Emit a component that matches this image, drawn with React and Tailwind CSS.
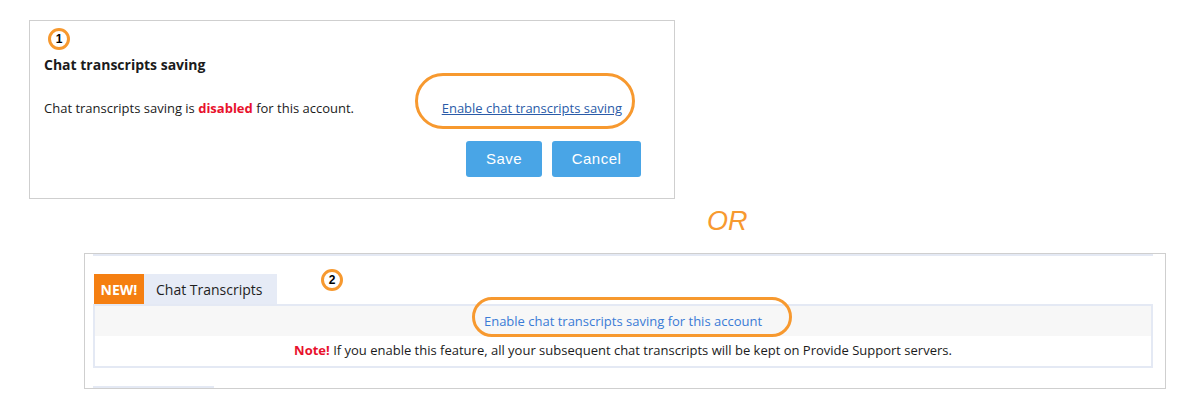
export default function App() {
    const os = { fontFamily: '"Open Sans", "Noto Sans", sans-serif' };

    return (
        <div className="w-[1200px] h-[400px] bg-white overflow-hidden text-[#1b1b1b]" style={os}>
            {/* panel 1 */}
            <div className="relative ml-[29px] mt-[20px] w-[646px] border border-[#cfcfcf] pl-[14px] pr-[33px] pb-[21px]">
                <div className="absolute left-[18px] top-[7px] w-[22px] h-[22px] rounded-full border-[3px] border-[#f7992f] bg-white flex items-center justify-center text-[12px] font-bold text-black [font-family:'Liberation_Sans',Arial,sans-serif]">
                    1
                </div>
                <div className="absolute left-[385px] top-[52px] w-[220px] h-[56px] rounded-full border-[3px] border-[#f7992f]"></div>

                <h2 className="mt-[34px] text-[14px] leading-[20px] font-bold">Chat transcripts saving</h2>

                <div className="mt-[23px] flex justify-between items-center text-[13px] leading-[20px] pr-[19px]">
                    <p>
                        Chat transcripts saving is <span className="font-bold text-[#e8112d]">disabled</span> for this account.
                    </p>
                    <a href="#" className="text-[#2a5ba8] underline">Enable chat transcripts saving</a>
                </div>

                <div className="mt-[23px] flex justify-end gap-[10px] [font-family:'Liberation_Sans',Arial,sans-serif]">
                    <button className="w-[76px] h-[36px] rounded-[3px] bg-[#49a5e6] text-white text-[15px] tracking-[0.5px]">Save</button>
                    <button className="w-[89px] h-[36px] rounded-[3px] bg-[#49a5e6] text-white text-[15px] tracking-[0.5px]">Cancel</button>
                </div>
            </div>

            {/* separator */}
            <div className="mt-[7px] ml-[707px] text-[27px] leading-[31px] italic text-[#f7992f] [font-family:'Liberation_Sans',Arial,sans-serif]">
                OR
            </div>

            {/* panel 2 */}
            <div className="relative mt-[16px] ml-[84px] w-[1082px] border border-[#cfcfcf]">
                <div className="absolute left-[236px] top-[15px] w-[22px] h-[22px] rounded-full border-[3px] border-[#f7992f] bg-white flex items-center justify-center text-[12px] font-bold text-black [font-family:'Liberation_Sans',Arial,sans-serif]">
                    2
                </div>
                <div className="absolute left-[387px] top-[43px] w-[320px] h-[40px] rounded-full border-[3px] border-[#f7992f]"></div>

                <div className="ml-[8px] w-[1060px]">
                    <div className="h-[2px] bg-[#e4e9f4]"></div>

                    <div className="mt-[18px] flex h-[30px] ml-[1px]">
                        <span className="w-[50px] bg-[#f57f11] text-white font-bold text-[14px] flex items-center justify-center">NEW!</span>
                        <span className="w-[133px] bg-[#e6ebf6] text-[14px] pl-[12px] flex items-center text-[#1e1e1e]">Chat Transcripts</span>
                    </div>

                    <div className="border-2 border-[#e4e9f4] text-[13px]">
                        <div className="h-[30px] bg-[#f7f7f7] flex items-center justify-center pt-[1px]">
                            <a href="#" className="text-[#3a7bd6]">Enable chat transcripts saving for this account</a>
                        </div>
                        <div className="h-[30px] flex items-center justify-center">
                            <p>
                                <span className="font-bold text-[#e8112d]">Note!</span> If you enable this feature, all your subsequent chat transcripts will be kept on Provide Support servers.
                            </p>
                        </div>
                    </div>

                    <div className="mt-[18px] w-[121px] h-[2px] bg-[#e4e9f4]"></div>
                </div>
            </div>
        </div>
    );
}
